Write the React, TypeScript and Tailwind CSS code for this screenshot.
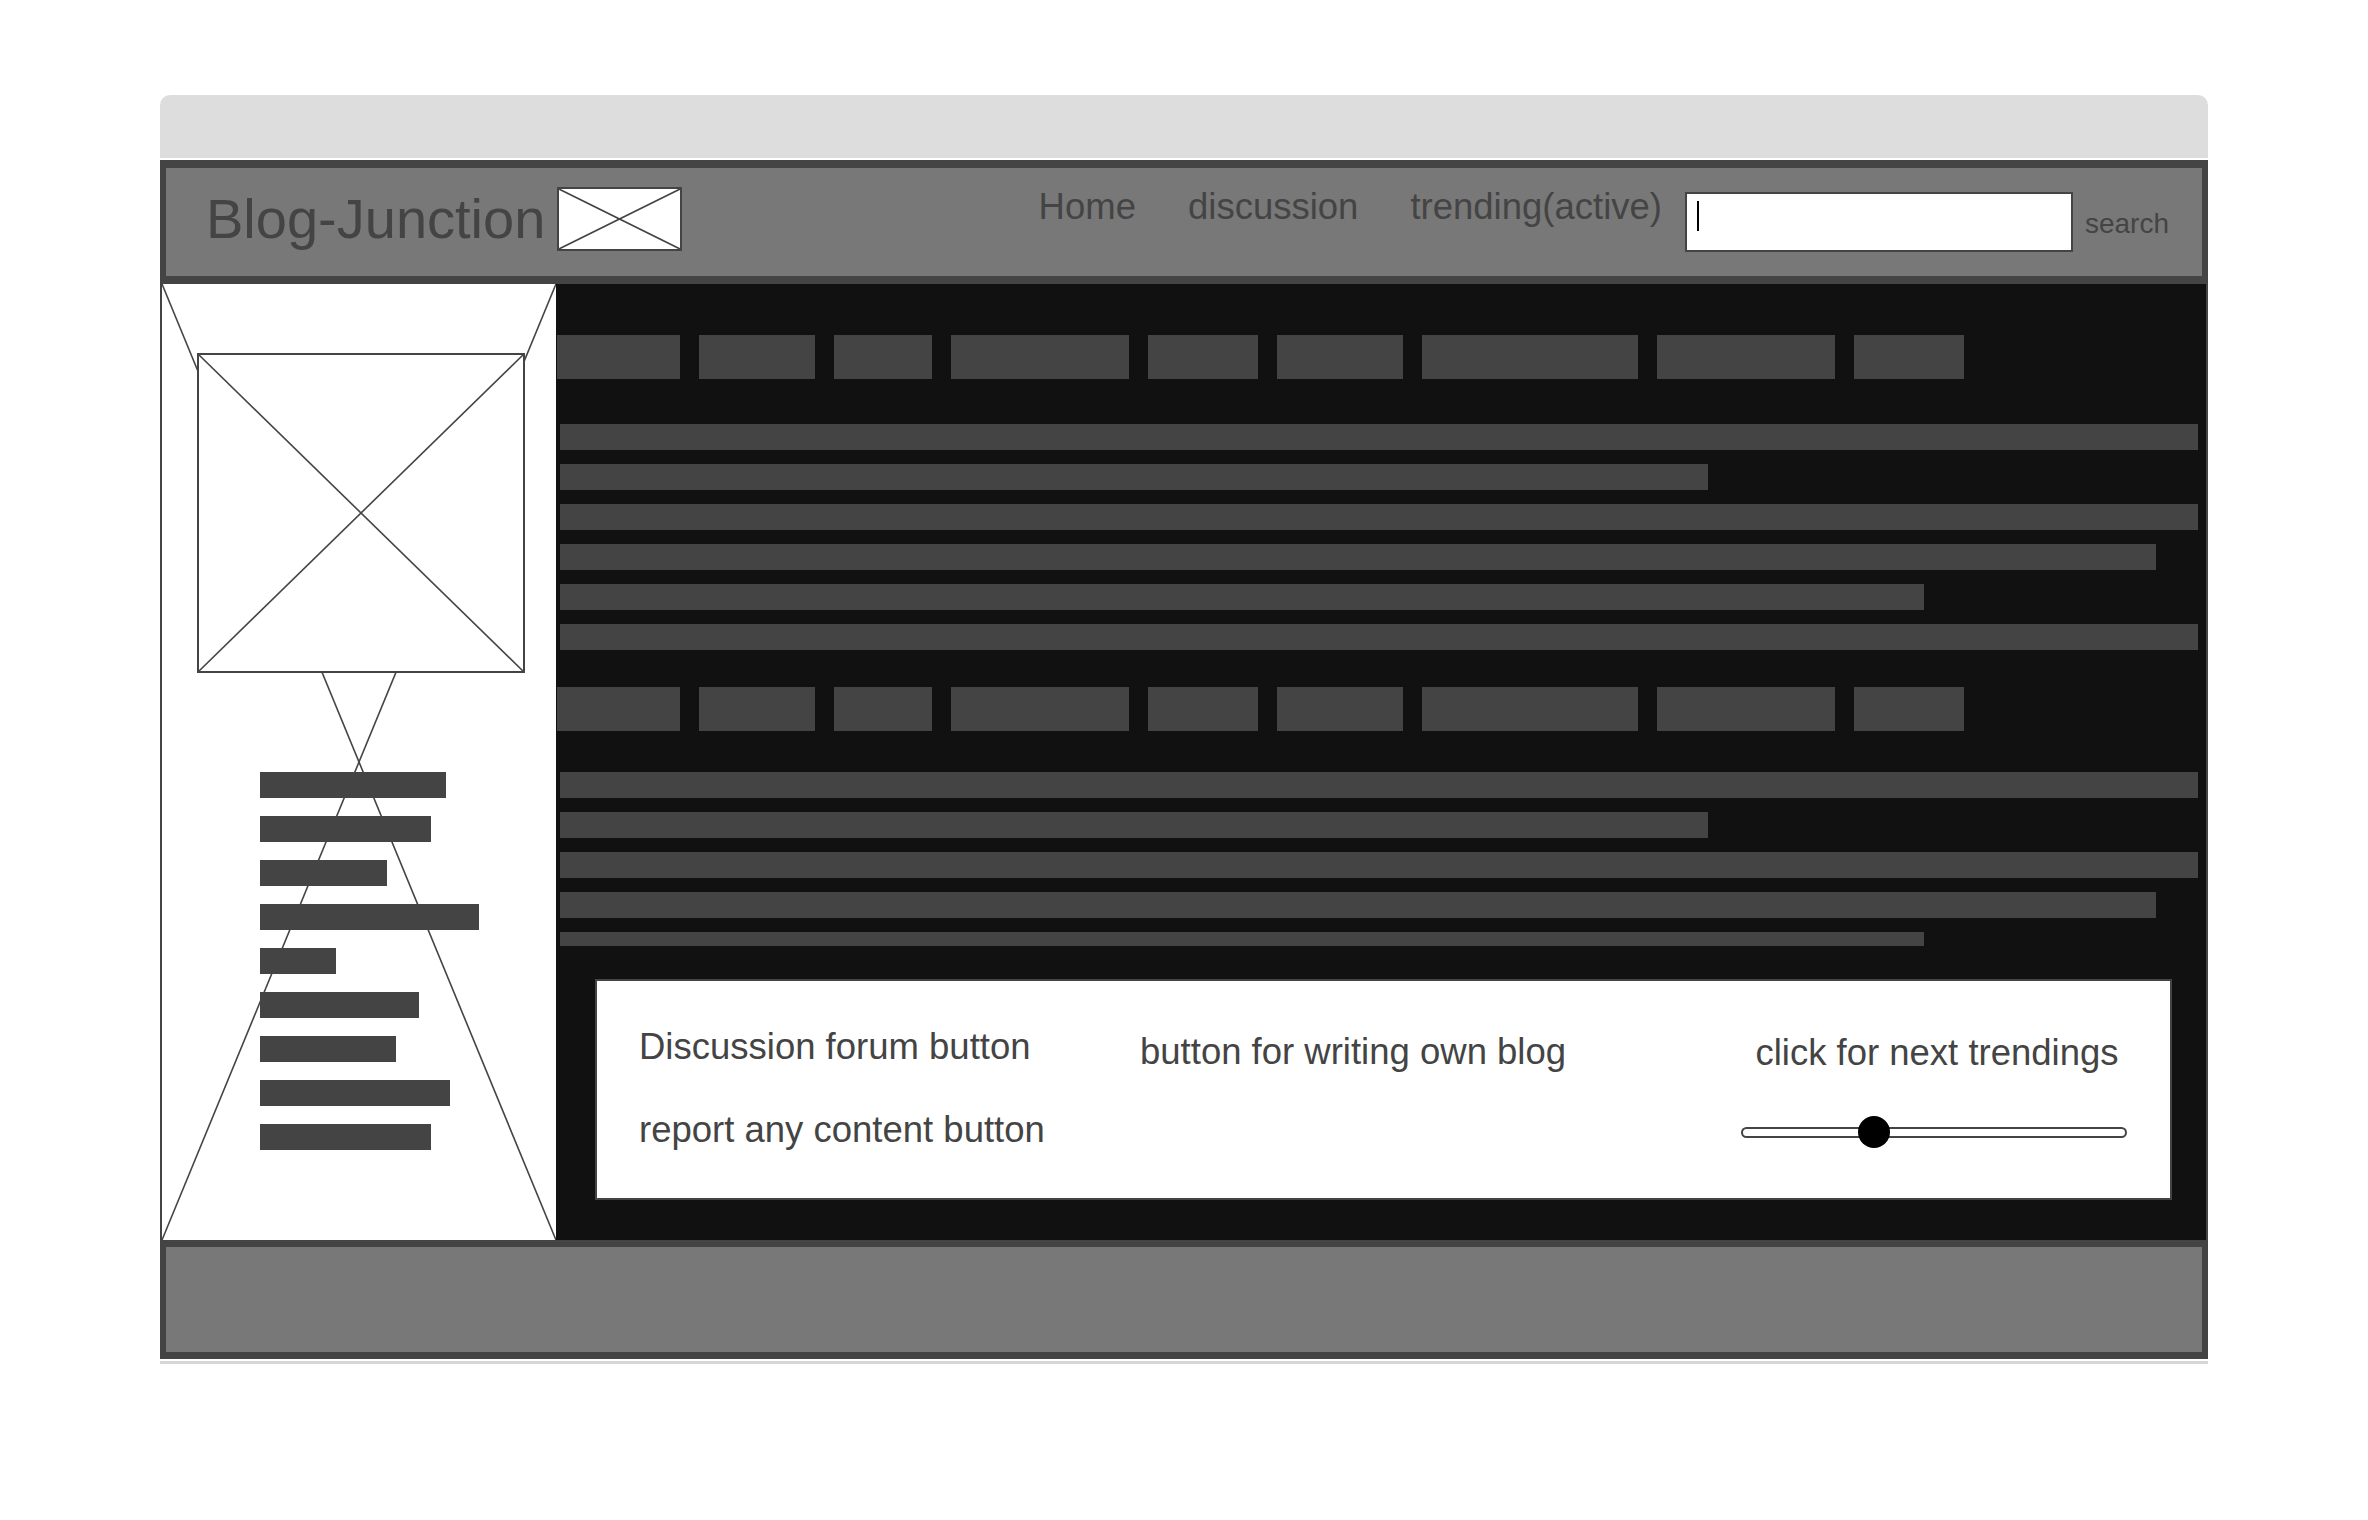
const tagWidths = ["w-[123px]", "w-[116px]", "w-[98px]", "w-[178px]", "w-[110px]", "w-[126px]", "w-[216px]", "w-[178px]", "w-[110px]"];

const firstBlock = ["w-full h-[26px]", "w-[1148px] h-[26px]", "w-full h-[26px]", "w-[1596px] h-[26px]", "w-[1364px] h-[26px]", "w-full h-[26px]"];
const secondBlock = ["w-full h-[26px]", "w-[1148px] h-[26px]", "w-full h-[26px]", "w-[1596px] h-[26px]", "w-[1364px] h-[14px]"];

const sideBars = ["w-[186px]", "w-[171px]", "w-[127px]", "w-[219px]", "w-[76px]", "w-[159px]", "w-[136px]", "w-[190px]", "w-[171px]"];

const Cross = () => (
    <svg className="absolute inset-0 h-full w-full" viewBox="0 0 100 100" preserveAspectRatio="none">
        <line x1="0" y1="0" x2="100" y2="100" stroke="#444" strokeWidth="1.6" vectorEffect="non-scaling-stroke" />
        <line x1="100" y1="0" x2="0" y2="100" stroke="#444" strokeWidth="1.6" vectorEffect="non-scaling-stroke" />
    </svg>
);

const TagRow = () => (
    <div className="flex gap-[19px]">
        {tagWidths.map((w, i) => (
            <div key={i} className={`${w} h-[44px] bg-[#444]`} />
        ))}
    </div>
);

const TextBars = ({ rows }: { rows: string[] }) => (
    <div className="flex flex-col gap-[14px] pl-[3px] pr-[8px]">
        {rows.map((r, i) => (
            <div key={i} className={`${r} bg-[#444]`} />
        ))}
    </div>
);

const Slider = () => (
    <div className="relative mt-[42px] flex h-[32px] w-[386px] items-center">
        <div className="h-[11px] w-full rounded-full border-2 border-[#444] bg-white" />
        <div className="absolute left-[117px] top-0 h-[32px] w-[32px] rounded-full bg-black" />
    </div>
);

export default function App() {
    return (
        <div className="min-h-screen bg-white pt-[95px] pl-[160px] font-['Liberation_Sans',Arial,sans-serif] text-[#444]">
            <div className="w-[2048px]">

                {/* browser bar */}
                <div className="mb-[2px] h-[63px] rounded-t-[10px] bg-[#dddddd]" />

                {/* HEADER */}
                <header className="h-[124px] border-x-[6px] border-y-[8px] border-[#444] bg-[#787878]">
                    <div className="flex h-full items-start pl-[40px] pr-[33px]">
                        <span className="mt-[19px] text-[56px] leading-[64px]">Blog-Junction</span>
                        <div className="relative ml-[12px] mt-[19px] h-[64px] w-[125px] border-2 border-[#444] bg-white">
                            <Cross />
                        </div>

                        <nav className="ml-auto mt-[19px] flex gap-[52px] text-[36.5px] leading-[40px]">
                            <a>Home</a>
                            <a>discussion</a>
                            <a>trending(active)</a>
                        </nav>

                        <div className="ml-[23px] mt-[24px] h-[60px] w-[388px] border-2 border-[#444] bg-white pl-[10px] pt-[7px]">
                            <div className="h-[30px] w-[2px] bg-black" />
                        </div>
                        <span className="ml-[12px] mt-[40px] text-[28px] leading-[32px]">search</span>
                    </div>
                </header>

                {/* BODY */}
                <div className="flex h-[956px] border-r-2 border-[#444]">

                    {/* SIDEBAR */}
                    <aside className="relative w-[396px] shrink-0 border-l-2 border-[#444] bg-white">
                        <Cross />
                        <div className="relative pl-[35px] pt-[69px]">
                            <div className="relative h-[320px] w-[328px] border-2 border-[#444] bg-white">
                                <Cross />
                            </div>
                            <div className="ml-[63px] mt-[99px] flex flex-col gap-[18px]">
                                {sideBars.map((w, i) => (
                                    <div key={i} className={`${w} h-[26px] bg-[#444]`} />
                                ))}
                            </div>
                        </div>
                    </aside>

                    {/* MAIN */}
                    <main className="flex-1 bg-[#111] pl-px pt-[51px]">
                        <TagRow />
                        <div className="mt-[45px]">
                            <TextBars rows={firstBlock} />
                        </div>
                        <div className="mt-[37px]">
                            <TagRow />
                        </div>
                        <div className="mt-[41px]">
                            <TextBars rows={secondBlock} />
                        </div>

                        {/* ACTIONS */}
                        <div className="ml-[38px] mt-[33px] flex h-[221px] w-[1577px] border-2 border-[#444] bg-white pl-[42px] pr-[43px] pt-[45px] text-[36.5px] leading-[42px]">
                            <div className="flex w-[501px] flex-col gap-[41px]">
                                <span>Discussion forum button</span>
                                <span>report any content button</span>
                            </div>
                            <span className="mt-[5px]">button for writing own blog</span>
                            <div className="ml-auto mt-[6px] flex w-[386px] flex-col items-center">
                                <span className="pl-[6px]">click for next trendings</span>
                                <Slider />
                            </div>
                        </div>
                    </main>
                </div>

                {/* FOOTER */}
                <footer className="h-[119px] border-x-[6px] border-y-[7px] border-[#444] bg-[#787878]" />
                <div className="mt-[2px] h-[3px] bg-[#d6d6d6]" />
            </div>
        </div>
    );
}
